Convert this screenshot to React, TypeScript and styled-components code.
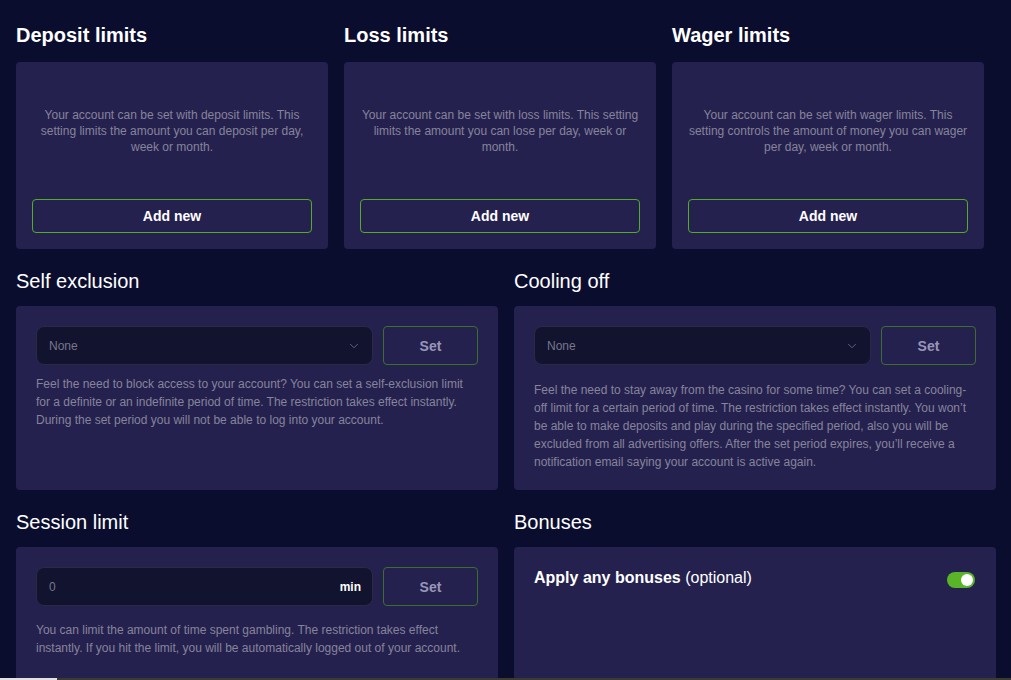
import React from "react";
import styled, { createGlobalStyle } from "styled-components";
import { ChevronDown } from "lucide-react";

const GlobalStyle = createGlobalStyle`
  html, body {
    margin: 0;
    padding: 0;
    background: #0b0d2f;
    font-family: "Liberation Sans", Arial, sans-serif;
    overflow: hidden;
  }
  * { box-sizing: border-box; }
`;

const Page = styled.div`
  padding: 23px 15px 0 16px;
  min-height: 680px;
  background: #0b0d2f;
`;

const TopRow = styled.div`
  display: grid;
  grid-template-columns: repeat(3, 312px);
  column-gap: 16px;
`;

const HalfRow = styled.div`
  display: grid;
  grid-template-columns: 1fr 1fr;
  column-gap: 16px;
  margin-top: 20px;
`;

const Section = styled.section`
  display: flex;
  flex-direction: column;
`;

const Heading = styled.h2<{ $bold?: boolean }>`
  margin: 0 0 ${(p) => (p.$bold ? 15 : 13)}px;
  font-size: 20px;
  line-height: 24px;
  font-weight: ${(p) => (p.$bold ? 700 : 400)};
  color: #ffffff;
`;

const Card = styled.div<{ $minHeight?: number }>`
  flex: 1 0 auto;
  background: #25214f;
  border-radius: 4px;
  padding: 20px 20px 19px;
  min-height: ${(p) => p.$minHeight ?? 0}px;
  display: flex;
  flex-direction: column;
`;

const LimitCard = styled(Card)`
  flex: 0 0 187px;
  padding: 16px;
  gap: 16px;
`;

const LimitText = styled.p`
  flex: 1;
  margin: 0;
  display: flex;
  align-items: center;
  justify-content: center;
  text-align: center;
  font-size: 12px;
  line-height: 16px;
  color: #85849a;
`;

const AddButton = styled.button`
  height: 34px;
  width: 100%;
  flex-shrink: 0;
  background: transparent;
  border: 1px solid #53ab2c;
  border-radius: 4px;
  color: #ffffff;
  font-family: inherit;
  font-size: 14px;
  font-weight: 700;
  cursor: pointer;
`;

const ControlRow = styled.div`
  display: flex;
  gap: 10px;
`;

const Field = styled.div`
  flex: 1;
  height: 39px;
  display: flex;
  align-items: center;
  justify-content: space-between;
  padding: 0 11px 0 12px;
  background: #12142f;
  border: 1px solid #2a2a42;
  border-radius: 8px;
  font-size: 12px;
  color: #77768c;
`;

const Unit = styled.span`
  color: #ffffff;
  font-weight: 700;
  font-size: 12px;
`;

const SetButton = styled.button`
  width: 95px;
  height: 39px;
  flex-shrink: 0;
  background: transparent;
  border: 1px solid #3b6f2d;
  border-radius: 4px;
  color: #9896b8;
  font-family: inherit;
  font-size: 14px;
  font-weight: 700;
  cursor: pointer;
`;

const Description = styled.p<{ $gap?: number }>`
  margin: ${(p) => p.$gap ?? 16}px 0 0;
  font-size: 12px;
  line-height: 18px;
  color: #85849a;
`;

const ToggleRow = styled.div`
  display: flex;
  align-items: center;
  justify-content: space-between;
  font-size: 16px;
  line-height: 22px;
  color: #ffffff;
  strong { font-weight: 700; }
`;

const Toggle = styled.span<{ $on?: boolean }>`
  position: relative;
  width: 28px;
  height: 16px;
  border-radius: 8px;
  margin: 3px 1px 0 0;
  background: ${(p) => (p.$on ? "#59b527" : "#3a3760")};
  &::after {
    content: "";
    position: absolute;
    top: 2px;
    left: ${(p) => (p.$on ? 14 : 2)}px;
    width: 12px;
    height: 12px;
    border-radius: 50%;
    background: #ffffff;
  }
`;

const ScrollTrack = styled.div`
  position: fixed;
  left: 0;
  right: 0;
  bottom: 0;
  height: 2px;
  background: #3b3a31;
`;

const ScrollThumb = styled.div`
  width: 57px;
  height: 100%;
  background: #e2e2e2;
`;

const limits = [
  {
    title: "Deposit limits",
    text: "Your account can be set with deposit limits. This setting limits the amount you can deposit per day, week or month.",
  },
  {
    title: "Loss limits",
    text: "Your account can be set with loss limits. This setting limits the amount you can lose per day, week or month.",
  },
  {
    title: "Wager limits",
    text: "Your account can be set with wager limits. This setting controls the amount of money you can wager per day, week or month.",
  },
];

export default function App() {
  return (
    <>
      <GlobalStyle />
      <Page>
        <TopRow>
          {limits.map((l) => (
            <Section key={l.title}>
              <Heading $bold>{l.title}</Heading>
              <LimitCard>
                <LimitText>{l.text}</LimitText>
                <AddButton>Add new</AddButton>
              </LimitCard>
            </Section>
          ))}
        </TopRow>

        <HalfRow>
          <Section>
            <Heading>Self exclusion</Heading>
            <Card>
              <ControlRow>
                <Field>
                  <span>None</span>
                  <ChevronDown size={14} color="#6c6b85" strokeWidth={1.5} />
                </Field>
                <SetButton>Set</SetButton>
              </ControlRow>
              <Description $gap={10}>
                Feel the need to block access to your account? You can set a self-exclusion limit
                for a definite or an indefinite period of time. The restriction takes effect instantly.
                During the set period you will not be able to log into your account.
              </Description>
            </Card>
          </Section>
          <Section>
            <Heading>Cooling off</Heading>
            <Card>
              <ControlRow>
                <Field>
                  <span>None</span>
                  <ChevronDown size={14} color="#6c6b85" strokeWidth={1.5} />
                </Field>
                <SetButton>Set</SetButton>
              </ControlRow>
              <Description>
                Feel the need to stay away from the casino for some time? You can set a cooling-off
                limit for a certain period of time. The restriction takes effect instantly. You won’t
                be able to make deposits and play during the specified period, also you will be
                excluded from all advertising offers. After the set period expires, you’ll receive a
                notification email saying your account is active again.
              </Description>
            </Card>
          </Section>
        </HalfRow>

        <HalfRow>
          <Section>
            <Heading>Session limit</Heading>
            <Card $minHeight={200}>
              <ControlRow>
                <Field>
                  <span>0</span>
                  <Unit>min</Unit>
                </Field>
                <SetButton>Set</SetButton>
              </ControlRow>
              <Description $gap={15}>
                You can limit the amount of time spent gambling. The restriction takes effect
                instantly. If you hit the limit, you will be automatically logged out of your account.
              </Description>
            </Card>
          </Section>
          <Section>
            <Heading>Bonuses</Heading>
            <Card $minHeight={200}>
              <ToggleRow>
                <span>
                  <strong>Apply any bonuses</strong> (optional)
                </span>
                <Toggle $on />
              </ToggleRow>
            </Card>
          </Section>
        </HalfRow>
      </Page>
      <ScrollTrack>
        <ScrollThumb />
      </ScrollTrack>
    </>
  );
}
